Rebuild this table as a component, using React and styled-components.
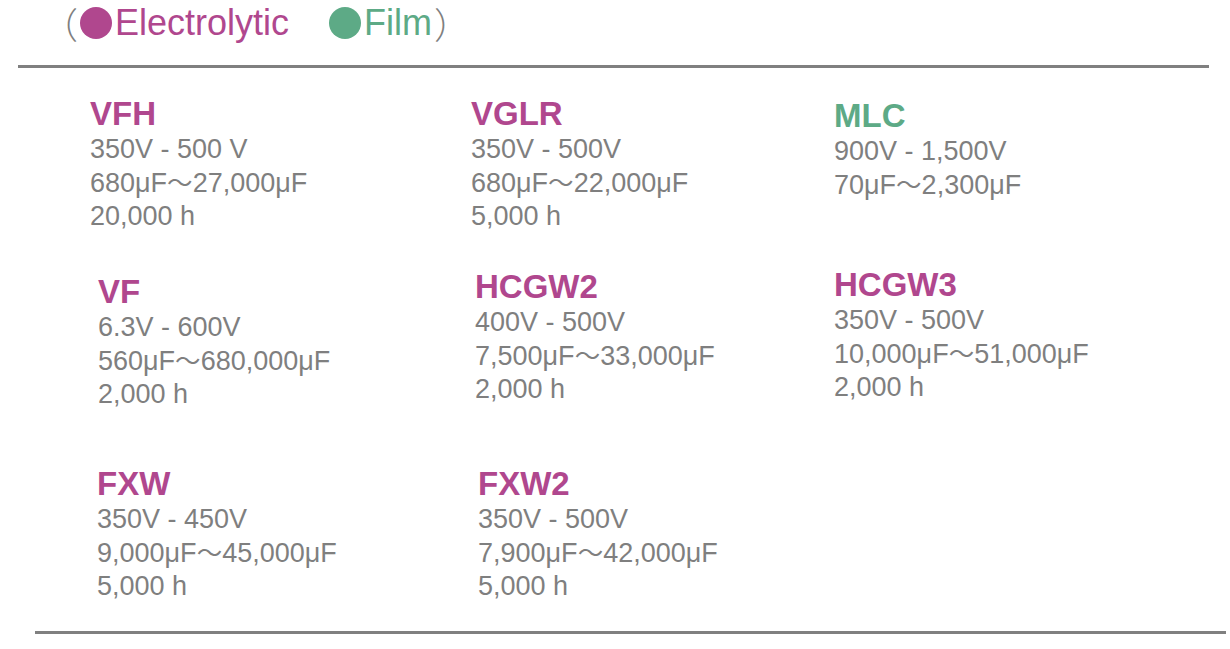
import styled, { createGlobalStyle } from 'styled-components'

const MAGENTA = '#b0478e'
const GREEN = '#5daa86'
const GRAY = '#7f7f7f'

const GlobalStyle = createGlobalStyle`
  body {
    margin: 0;
    background: #ffffff;
    font-family: "Liberation Sans", Arial, sans-serif;
  }
`

const Page = styled.div`
  width: 1230px;
  height: 649px;
  overflow: hidden;
`

const Legend = styled.div`
  display: flex;
  align-items: center;
  height: 40px;
  padding: 3px 0 0 39px;
`

const Paren = styled.span`
  font-family: "Noto Sans CJK JP", "Liberation Sans", sans-serif;
  font-size: 36px;
  line-height: normal;
  padding: 0 3px;
  color: ${GRAY};
  font-weight: 300;
  margin-left: ${(p) => p.ml || 0}px;
  margin-right: ${(p) => p.mr || 0}px;
`

const Item = styled.span`
  display: flex;
  align-items: center;
  color: ${(p) => p.color};
  font-size: 36px;
  line-height: 42px;
  margin-right: ${(p) => p.gap || 0}px;
`

const Dot = styled.span`
  width: 32px;
  height: 32px;
  border-radius: 50%;
  background: ${(p) => p.color};
  margin-right: 3px;
`

const Rule = styled.div`
  height: 3px;
  background: #808080;
  margin-left: ${(p) => p.left}px;
  width: 1191px;
  margin-top: ${(p) => p.top}px;
`

const Grid = styled.div`
  display: grid;
  grid-template-columns: 381px 363px 1fr;
  grid-template-rows: 173px 197px auto;
  padding-left: 90px;
  margin-top: 29px;
`

const Card = styled.div`
  margin-left: ${(p) => p.dx || 0}px;
  margin-top: ${(p) => p.dy || 0}px;
  color: ${GRAY};
  font-size: 27px;
`

const Title = styled.div`
  font-size: 33px;
  font-weight: bold;
  line-height: 34px;
  color: ${(p) => (p.film ? GREEN : MAGENTA)};
`

const Specs = styled.div`
  margin-top: 3px;
  line-height: 31px;
  white-space: nowrap;
`

const Tilde = styled.span`
  font-family: "Noto Sans CJK JP", sans-serif;
  font-size: 25.5px;
`

const Life = styled.div`
  margin-top: 2px;
`

const products = [
  { name: 'VFH', volt: '350V - 500 V', cap: ['680μF', '27,000μF'], life: '20,000 h' },
  { name: 'VGLR', volt: '350V - 500V', cap: ['680μF', '22,000μF'], life: '5,000 h' },
  { name: 'MLC', volt: '900V - 1,500V', cap: ['70μF', '2,300μF'], film: true, dy: 2 },
  { name: 'VF', volt: '6.3V - 600V', cap: ['560μF', '680,000μF'], life: '2,000 h', dx: 8, dy: 5 },
  { name: 'HCGW2', volt: '400V - 500V', cap: ['7,500μF', '33,000μF'], life: '2,000 h', dx: 4 },
  { name: 'HCGW3', volt: '350V - 500V', cap: ['10,000μF', '51,000μF'], life: '2,000 h', dy: -2 },
  { name: 'FXW', volt: '350V - 450V', cap: ['9,000μF', '45,000μF'], life: '5,000 h', dx: 7 },
  { name: 'FXW2', volt: '350V - 500V', cap: ['7,900μF', '42,000μF'], life: '5,000 h', dx: 7 },
]

export default function App() {
  return (
    <Page>
      <GlobalStyle />
      <Legend>
        <Paren mr={-1}>（</Paren>
        <Item color={MAGENTA} gap={40}>
          <Dot color={MAGENTA} />
          Electrolytic
        </Item>
        <Item color={GREEN}>
          <Dot color={GREEN} />
          Film
        </Item>
        <Paren ml={-1}>）</Paren>
      </Legend>
      <Rule left={18} top={22} />
      <Grid>
        {products.map((p) => (
          <Card key={p.name} dx={p.dx} dy={p.dy}>
            <Title film={p.film}>{p.name}</Title>
            <Specs>
              <div>{p.volt}</div>
              <div>
                {p.cap[0]}
                <Tilde>～</Tilde>
                {p.cap[1]}
              </div>
              {p.life && <Life>{p.life}</Life>}
            </Specs>
          </Card>
        ))}
      </Grid>
      <Rule left={35} top={29} />
    </Page>
  )
}
